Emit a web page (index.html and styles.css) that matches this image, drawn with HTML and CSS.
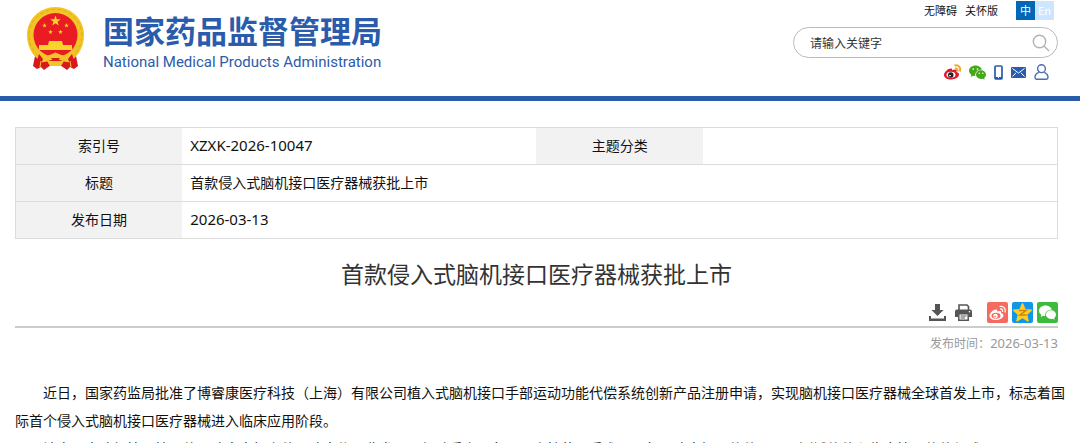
FILE: index.html
```html
<!DOCTYPE html>
<html lang="zh-CN">
<head>
<meta charset="utf-8">
<title>首款侵入式脑机接口医疗器械获批上市</title>
<link rel="stylesheet" href="styles.css">
</head>
<body>
<svg class="sprite" aria-hidden="true">
  <symbol id="star" viewBox="-10 -10 20 20"><path d="M0-10 2.4-3.2 9.5-3.1 3.8 1.2 5.9 8.1 0 4-5.9 8.1-3.8 1.2-9.5-3.1-2.4-3.2Z"/></symbol>
  <symbol id="wechat" viewBox="0 0 34 30">
    <path fill="currentColor" d="M13 1C5.800 1 0 5.700 0 11.500c0 3.300 1.900 6.200 4.800 8.100L3.600 24l5-2.600c1.400.4 2.600.6 3.900.6-.9-7.400 5.400-13 13.300-13C24.500 4.400 19.400 1 13 1Z"/>
    <path fill="currentColor" d="M34 19.200c0-4.900-4.700-8.700-10.200-8.700S14 14.400 14 19.200s4.400 8.700 9.800 8.700c1.200 0 2.400-.2 3.500-.5l4 2.100-1-3.500c2.300-1.700 3.700-4.100 3.700-6.800Z"/>
    <g class="wechat-eye"><circle cx="8.500" cy="8" r="1.700"/><circle cx="17" cy="8" r="1.700"/><circle cx="20.500" cy="16.500" r="1.500"/><circle cx="27.500" cy="16.500" r="1.500"/></g>
  </symbol>
</svg>

<header class="site-header">
  <div class="wrap header-row">
    <a class="brand" href="#">
      <svg class="emblem" viewBox="0 0 57 63" aria-hidden="true">
        <path fill="#d7191e" d="M9 44 6 59l4 3 4-2 3 3 7-5h9l7 5 3-3 4 2 4-3-3-15Z"/>
        <path fill="#f3c426" d="M28.500 0C13 0 0 12 0 28c0 11 5 20 12 25h33c7-5 12-14 12-25C57 12 44 0 28.500 0Z"/>
        <path fill="none" stroke="#d99b18" stroke-width="1" stroke-dasharray="4 2" opacity=".6" d="M11 49C-2 37-1 15 15 6c9-5 18-5 27 0 16 9 17 31 4 43"/>
        <circle cx="28.500" cy="28" r="22" fill="#e91c24"/>
        <g fill="#f8d32c">
          <use href="#star" x="23" y="8.500" width="11" height="11"/>
          <use href="#star" x="15" y="16" width="5" height="5"/><use href="#star" x="37" y="16" width="5" height="5"/>
          <use href="#star" x="21" y="22.500" width="5" height="5"/><use href="#star" x="31" y="22.500" width="5" height="5"/>
          <path d="M22 34h13l1 4h9v5H12v-5h9Z"/>
        </g>
        <path fill="none" stroke="#f3c426" stroke-width="3" d="M10 44c4 8 10 7 18.500 3C37 51 43 52 47 44M12 53c6 3 10-2 16.500-3C35 51 39 56 45 53"/>
        <path fill="#f3c426" d="M20 54h17l-3 5H23Z"/>
        <path fill="#d7191e" d="m12 47-4 12 5 1 3-8Zm33 0 4 12-5 1-3-8ZM24 51h9l-2 3h-5Z"/>
        <path fill="none" stroke="#f3c426" d="m14 54-1 6m30-6 1 6"/>
      </svg>
      <span class="brand-text">
        <strong class="brand-cn">国家药品监督管理局</strong>
        <span class="brand-en">National Medical Products Administration</span>
      </span>
    </a>
    <div class="tools">
      <nav class="top-links">
        <a href="#">无障碍</a>
        <a href="#">关怀版</a>
        <span class="langs"><a class="lang lang-on" href="#">中</a><a class="lang" href="#">En</a></span>
      </nav>
      <form class="search">
        <input class="search-input" type="text" placeholder="请输入关键字" aria-label="请输入关键字">
        <button class="search-btn" type="button" aria-label="搜索">
          <svg width="18" height="18" viewBox="0 0 18 18" fill="none" stroke="#b3b3b3" stroke-width="1.400"><circle cx="7.500" cy="7.500" r="6.200"/><path d="m12 12 5 5"/></svg>
        </button>
      </form>
      <nav class="social">
        <a href="#" aria-label="微博"><svg width="17" height="16" viewBox="0 0 34 32">
          <path fill="#e6162d" d="M14 9C8 9 0 16 0 22c0 5 6 9 14 9 10 0 16-6 16-10 0-3-2-4-5-5 1-3 0-5-3-5-2 0-4 .5-6 1.500C17 10 16 9 14 9Z"/>
          <ellipse cx="14" cy="21.500" rx="9" ry="6" fill="#fff"/><circle cx="13.500" cy="22" r="5.500" fill="#222"/><circle cx="12" cy="23" r="1.700" fill="#fff"/>
          <path fill="none" stroke="#f5a623" stroke-width="4" d="M21 3c8-2 13 4 11 12M22 9c4-1 6 2 5 6"/></svg></a>
        <a class="green" href="#" aria-label="微信"><svg width="17" height="15"><use href="#wechat"/></svg></a>
        <a href="#" aria-label="手机"><svg width="9" height="15" viewBox="0 0 9 15"><rect x="1" y="1" width="7" height="13" rx="1" fill="none" stroke="#2b5bab" stroke-width="1.700"/><path d="M1 12h7v2H1Z" fill="#2b5bab"/><path d="M4 12.500h1" stroke="#fff"/></svg></a>
        <a href="#" aria-label="邮箱"><svg width="15" height="11" viewBox="0 0 15 11"><rect width="15" height="11" rx="1" fill="#2b5bab"/><path d="m1.500 1.500 6 4.500 6-4.500M1.500 9.500 5 5.800m8.500 3.700L10 5.800" fill="none" stroke="#fff"/></svg></a>
        <a href="#" aria-label="用户"><svg width="15" height="16" viewBox="0 0 15 16" fill="none" stroke="#4a6cb3" stroke-width="1.400"><circle cx="7.500" cy="4.700" r="3.900"/><path d="M4.800 8.300C2 9.300 1 11 1 13.500c0 1.200.6 1.700 1.600 1.700h9.800c1 0 1.600-.5 1.600-1.700 0-2.500-1-4.200-3.800-5.200"/></svg></a>
      </nav>
    </div>
  </div>
</header>

<main class="wrap">
  <table class="meta">
    <tbody>
      <tr><th scope="row">索引号</th><td class="latin">XZXK-2026-10047</td><th scope="row">主题分类</th><td></td></tr>
      <tr><th scope="row">标题</th><td colspan="3">首款侵入式脑机接口医疗器械获批上市</td></tr>
      <tr><th scope="row">发布日期</th><td class="latin" colspan="3">2026-03-13</td></tr>
    </tbody>
  </table>

  <article>
    <h1 class="title">首款侵入式脑机接口医疗器械获批上市</h1>
    <div class="actions">
      <button class="act" type="button" aria-label="下载"><svg width="17" height="17" viewBox="0 0 17 17" fill="#555"><path d="M6 0h5v6h3.500l-6 6-6-6H6Z"/><path d="M0 12h2v2.500h13V12h2v5H0Z"/></svg></button>
      <button class="act" type="button" aria-label="打印"><svg width="17" height="17" viewBox="0 0 17 17"><path fill="none" stroke="#555" stroke-width="1.600" d="M4 6V1h8l1.500 1.500V6"/><path fill="#555" d="M2 5.500h13a2 2 0 0 1 2 2V13h-3v-3H3v3H0V7.500a2 2 0 0 1 2-2Z"/><path fill="#fff" stroke="#555" stroke-width="1.500" d="M3.800 9.800h9.400v6.400H3.800Z"/><path stroke="#555" d="M5.500 12h6m-6 2h4.500"/><circle cx="14.500" cy="7.700" r=".8" fill="#fff"/></svg></button>
      <span class="share">
        <a class="share-link coral" href="#" aria-label="分享到微博"><svg width="17" height="16" viewBox="0 0 34 32"><path fill="#fff" d="M14 9C8 9 1 16 1 22c0 5 6 8 13 8 9 0 15-5 15-9 0-3-2-4-5-5 1-3 0-4-3-4-2 0-3 .5-5 1C17 10 16 9 14 9Z"/><ellipse cx="14" cy="21.500" rx="9" ry="6" fill="#f56b5f"/><circle cx="13" cy="22" r="4.500" fill="#fff"/><circle cx="12" cy="23" r="1.700" fill="#f56b5f"/><path fill="none" stroke="#fff" stroke-width="2.400" d="M21 3c8-2 13 4 11 12M22 8c4-1 6 2 5 6"/></svg></a>
        <a class="share-link blue" href="#" aria-label="分享到QQ空间"><svg width="21" height="21" viewBox="0 0 21 21"><path fill="#ffce1f" stroke="#ffce1f" stroke-width="1.500" stroke-linejoin="round" d="m10.500 1.800 2.500 6 6.300.5-4.800 4.200 1.500 6.300-5.500-3.400L5 18.800l1.500-6.300-4.800-4.200L8 7.800Z"/><path d="M7 8.500h7L8 13h6.500" fill="none" stroke="#d08410" stroke-width="1.500"/></svg></a>
        <a class="share-link lime" href="#" aria-label="分享到微信"><svg width="17" height="15"><use href="#wechat"/></svg></a>
      </span>
    </div>
    <p class="pub">发布时间：<time class="pub-date" datetime="2026-03-13">2026-03-13</time></p>
    <div class="content">
      <p>近日，国家药监局批准了博睿康医疗科技（上海）有限公司植入式脑机接口手部运动功能代偿系统创新产品注册申请，实现脑机接口医疗器械全球首发上市，标志着国际首个侵入式脑机接口医疗器械进入临床应用阶段。</p>
      <p>该产品由脑机接口植入体、脑电电极套件、脑电信号收发器、气动手套设备、一次性使用手术工具包、脑电解码软件、医用测试软件和临床管理软件组成。</p>
    </div>
  </article>
</main>
</body>
</html>
```
FILE: styles.css
```css
* { box-sizing: border-box; }

body {
  margin: 0;
  background: #fff;
  color: #111;
  font-family: "Noto Sans CJK SC", sans-serif;
  font-size: 14px;
  line-height: 22px;
}

a { color: inherit; text-decoration: none; }
svg { display: block; }
button { padding: 0; border: 0; background: none; cursor: pointer; }
.sprite { position: absolute; width: 0; height: 0; }
.wrap { margin: 0 22px 0 15px; }

.site-header { border-bottom: 5px solid #2b5bab; }
.header-row { display: flex; justify-content: space-between; min-height: 96px; }

.brand {
  display: flex;
  align-items: flex-start;
  gap: 19px;
  padding: 7px 0 0 12px;
  color: #2b5bab;
}
.emblem { width: 57px; height: 63px; }
.brand-text { display: flex; flex-direction: column; gap: 2px; padding-top: 3px; white-space: nowrap; }
.brand-cn { font-size: 31px; line-height: 40px; }
.brand-en { font-family: Roboto, sans-serif; font-size: 15px; line-height: 20px; }

.tools { display: flex; flex-direction: column; align-items: flex-end; width: 265px; }
.top-links {
  display: flex;
  align-items: center;
  gap: 8px;
  padding: 1px 4px 0 0;
  font-size: 11px;
  line-height: 19px;
}
.langs { display: flex; margin-left: 10px; }
.lang { width: 19px; background: #cce6ff; color: #fff; text-align: center; }
.lang-on { background: #0068b7; }

.search {
  display: flex;
  align-items: center;
  width: 100%;
  height: 31px;
  margin-top: 7px;
  padding: 0 7px 0 16px;
  border: 1px solid #bbb;
  border-radius: 16px;
}
.search-input {
  flex: 1;
  min-width: 0;
  padding: 0;
  border: 0;
  outline: 0;
  background: none;
  font: 12px/20px "Noto Sans CJK SC", sans-serif;
}
.search-input::placeholder { color: #333; opacity: 1; }

.social { display: flex; align-items: center; gap: 8px; padding: 6px 9px 0 0; }
.green { color: #45a818; }
.wechat-eye { fill: #fff; }

.meta {
  width: 100%;
  margin-top: 26px;
  border: 1px solid #dcdcdc;
  border-collapse: collapse;
  table-layout: fixed;
}
.meta tr { border-bottom: 1px solid #dcdcdc; }
.meta th, .meta td { padding: 6px 8px 8px; font-weight: 400; }
.meta th { width: 16%; background: #f2f2f2; text-align: center; }
.meta td { width: 34%; }
.meta .latin { font-family: "Noto Sans", sans-serif; font-size: 15px; }

.title {
  margin: 16px 0 0;
  color: #333;
  font-size: 23px;
  font-weight: 400;
  line-height: 36px;
  text-align: center;
}
.actions {
  display: flex;
  justify-content: flex-end;
  align-items: center;
  gap: 9px;
  margin-top: 11px;
  padding-bottom: 3px;
  border-bottom: 2px solid #ccc;
}
.share { display: flex; gap: 4px; margin-left: 6px; }
.share-link { display: grid; place-items: center; width: 21px; height: 21px; border-radius: 2px; color: #fff; }
.coral { background: #f56b5f; }
.blue { background: #1296e8; }
.lime { background: #3dbb3d; }

.pub { margin: 4px 0 0; color: #999; font-size: 12px; text-align: right; }
.pub-date { font-family: "Noto Sans", sans-serif; font-size: 13px; }

.content { margin: 24px -8px 0 0; line-height: 28px; }
.content p { margin: 0; text-indent: 2em; }
```
